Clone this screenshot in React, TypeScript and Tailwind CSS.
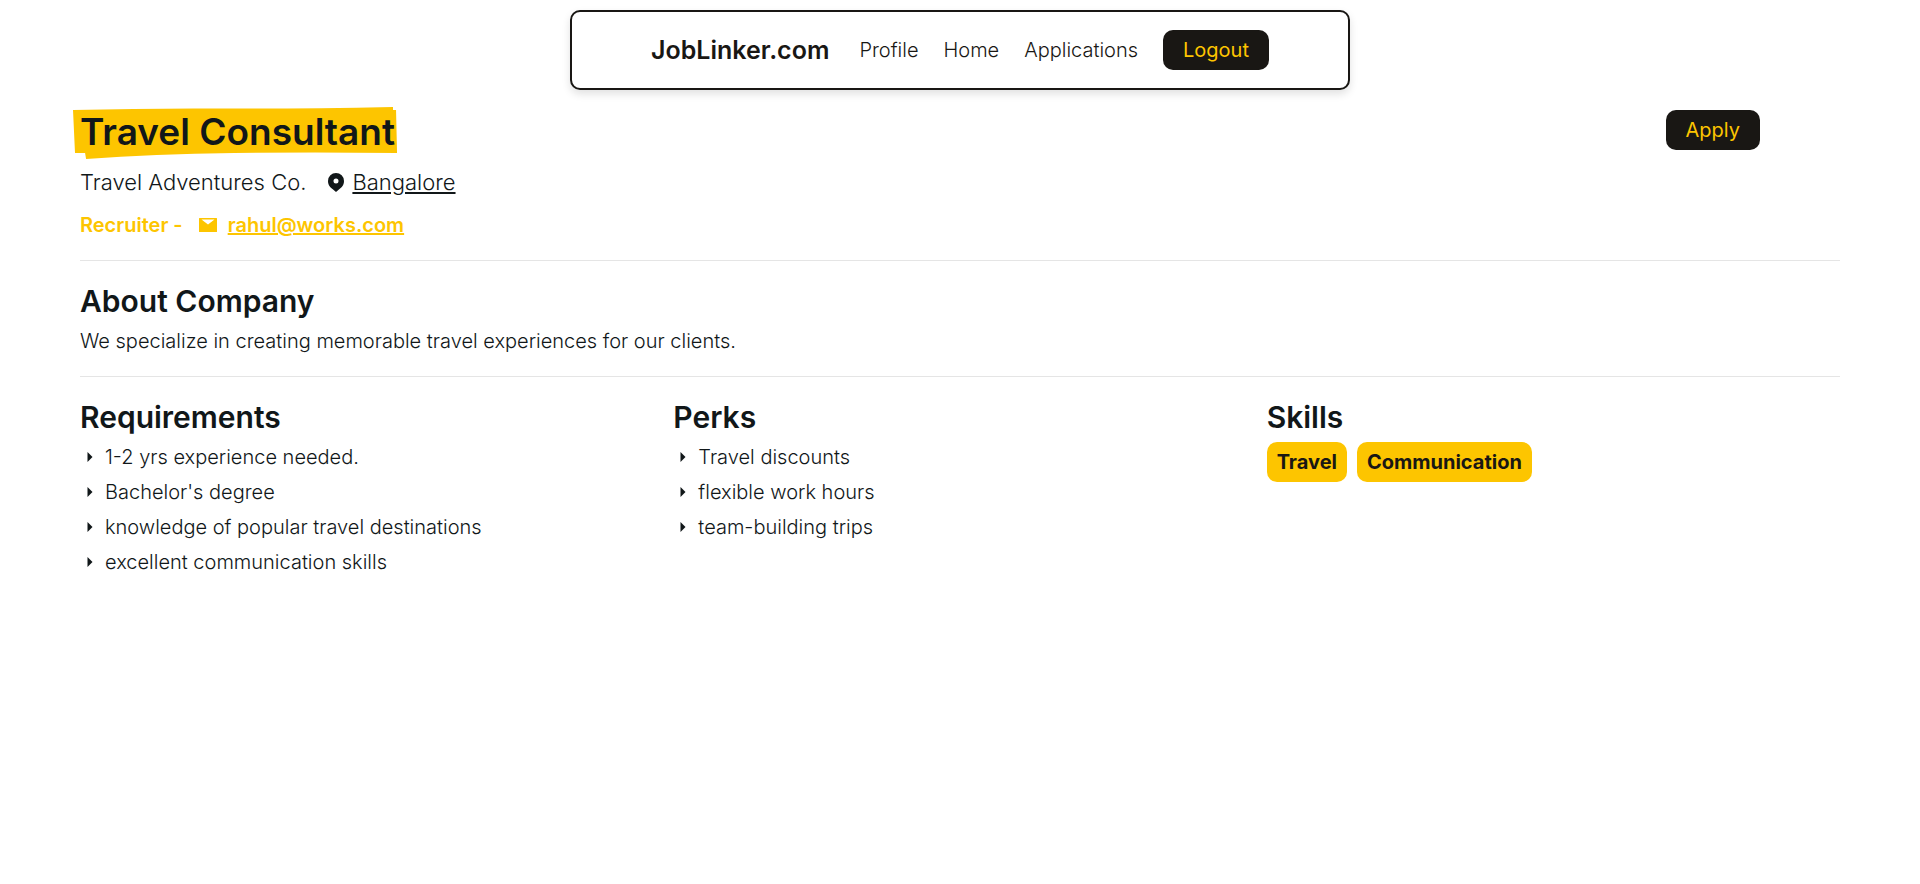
import React from "react";
import { IoMdArrowDropright } from "react-icons/io";

const requirements = [
  "1-2 yrs experience needed.",
  "Bachelor's degree",
  "knowledge of popular travel destinations",
  "excellent communication skills",
];
const perks = ["Travel discounts", "flexible work hours", "team-building trips"];
const skills = ["Travel", "Communication"];

const heading = "text-[30px] leading-[40px] font-semibold";
const darkButton =
  "h-10 rounded-[10px] bg-[#191714] px-5 text-xl leading-[30px] font-normal text-[#fdc500]";

function BulletList({ items }: { items: string[] }) {
  return (
    <ul className="pt-[2px]">
      {items.map((item) => (
        <li key={item} className="flex h-[35px] items-center gap-[5px]">
          <IoMdArrowDropright className="size-5 shrink-0" aria-hidden="true" />
          {item}
        </li>
      ))}
    </ul>
  );
}

function PinIcon() {
  return (
    <svg viewBox="0 0 16 19" className="mt-[2px] h-[19px] w-4" aria-hidden="true">
      <path
        fill="currentColor"
        fillRule="evenodd"
        d="M8 0a8 8 0 0 1 8 8c0 4.200-2.300 6.500-4.800 8.300L8 19l-3.200-2.700C2.300 14.500 0 12.200 0 8a8 8 0 0 1 8-8Zm0 5.500a2.500 2.500 0 1 0 0 5 2.500 2.500 0 0 0 0-5Z"
      />
    </svg>
  );
}

function MailIcon() {
  return (
    <svg viewBox="0 0 18 14" className="mr-[11px] ml-4 h-[14px] w-[18px]" aria-hidden="true">
      <path
        fill="currentColor"
        fillRule="evenodd"
        d="M.5 0h17a.5.5 0 0 1 .5.5v13a.5.5 0 0 1-.5.5H.5a.5.5 0 0 1-.5-.5V.5A.5.5 0 0 1 .5 0ZM2.500 1.500 9 6.600l6.500-5.100Z"
      />
    </svg>
  );
}

export default function App() {
  return (
    <div className="font-[Inter,sans-serif] text-xl leading-[30px] font-light text-[#111719]">
      <header className="flex justify-center pt-[10px]">
        <nav className="flex h-20 w-full max-w-[780px] items-center justify-center rounded-[10px] border-2 border-[#191714] bg-white text-[#191714] shadow-[0_4px_8px_rgba(0,0,0,0.12)]">
          <a href="#" className="mr-[30px] text-[25px] font-semibold">JobLinker.com</a>
          <div className="flex items-center gap-[25px]">
            <a href="#profile">Profile</a>
            <a href="#home">Home</a>
            <a href="#applications">Applications</a>
            <button type="button" className={darkButton}>Logout</button>
          </div>
        </nav>
      </header>

      <main className="px-20 pt-5">
        <section className="flex items-start justify-between border-b border-[#e5e5e5] pb-5">
          <div>
            <h1 className="relative isolate w-fit text-[37px] leading-[44px] font-semibold">
              <svg
                viewBox="0 0 322 52"
                preserveAspectRatio="none"
                className="absolute -top-[3px] -left-[7px] -z-10 h-[52px] w-[calc(100%+9px)] text-[#fdc500]"
                aria-hidden="true"
              >
                <path
                  fill="currentColor"
                  d="M0 3Q75 1 150 1.500T318 0V3H321L322 46Q240 45 160 46T13 52L12 46H2Z"
                />
              </svg>
              Travel Consultant
            </h1>
            <p className="mt-[10px] flex h-[35px] items-center text-[22px]">
              Travel Adventures Co.
              <span className="ml-[22px] flex items-center gap-2">
                <PinIcon />
                <a href="#bangalore" className="underline">Bangalore</a>
              </span>
            </p>
            <p className="mt-[11px] flex h-[30px] items-center font-semibold text-[#fdc500]">
              Recruiter -
              <MailIcon />
              <a href="mailto:rahul@works.com" className="underline">rahul@works.com</a>
            </p>
          </div>
          <button type="button" className={darkButton + " mr-20"}>Apply</button>
        </section>

        <section className="border-b border-[#e5e5e5] py-5">
          <h2 className={heading}>About Company</h2>
          <p className="pt-[5px]">We specialize in creating memorable travel experiences for our clients.</p>
        </section>

        <div className="grid grid-cols-3 gap-5 pt-5">
          <section>
            <h2 className={heading}>Requirements</h2>
            <BulletList items={requirements} />
          </section>
          <section>
            <h2 className={heading}>Perks</h2>
            <BulletList items={perks} />
          </section>
          <section>
            <h2 className={heading}>Skills</h2>
            <ul className="flex flex-wrap gap-[10px] pt-[5px]">
              {skills.map((skill) => (
                <li
                  key={skill}
                  className="rounded-[10px] bg-[#fdc500] px-[10px] py-[5px] font-bold text-[#191714]"
                >
                  {skill}
                </li>
              ))}
            </ul>
          </section>
        </div>
      </main>
    </div>
  );
}
